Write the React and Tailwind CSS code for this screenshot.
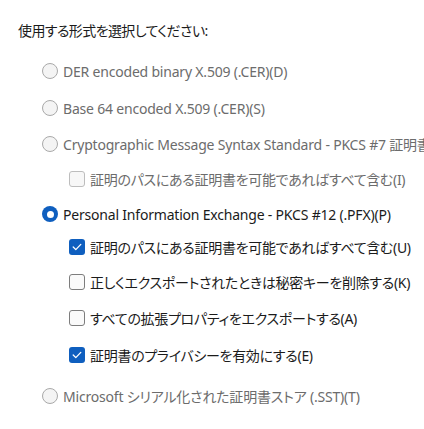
const font = "[font-family:'Noto_Sans','Noto_Sans_CJK_JP',sans-serif] [font-feature-settings:'palt']";

function Radio({ checked }) {
  if (checked) {
    return (
      <span className="w-[16px] h-[16px] rounded-full bg-[#0f5fbf] flex items-center justify-center shrink-0">
        <span className="w-[7px] h-[7px] rounded-full bg-white" />
      </span>
    );
  }
  return <span className="w-[16px] h-[16px] rounded-full border border-[#a9a9a9] bg-[#f4f4f4] shrink-0" />;
}

function Check({ checked, disabled }) {
  if (checked) {
    return (
      <span className="w-[16px] h-[16px] rounded-[3px] bg-[#0f5fbf] flex items-center justify-center shrink-0">
        <svg width="10" height="8" viewBox="0 0 10 8" fill="none">
          <path d="M1.2 4 L3.8 6.6 L8.8 1.4" stroke="white" strokeWidth="1.3" strokeLinecap="round" strokeLinejoin="round" />
        </svg>
      </span>
    );
  }
  return (
    <span
      className={
        disabled
          ? "w-[16px] h-[16px] rounded-[3px] border border-[#bdbdbd] bg-[#f7f7f7] shrink-0"
          : "w-[16px] h-[16px] rounded-[3px] border border-[#7d7d7d] bg-[#fafafa] shrink-0"
      }
    />
  );
}

export default function App() {
  return (
    <div className={`w-[424px] h-[429px] bg-white overflow-hidden text-[14px] ${font}`}>
      <div className="mt-[20px] h-[20px] pl-[18px] flex items-center text-[#1b1b1b] tracking-[-0.6px]">使用する形式を選択してください:</div>

      <div className="mt-[21px] h-[20px] pl-[42px] flex items-center gap-[5px] text-[#6c6c6c] whitespace-nowrap tracking-[-0.2px]">
        <Radio />
        <span>DER encoded binary X.509 (.CER)(D)</span>
      </div>
      <div className="mt-[17px] h-[20px] pl-[42px] flex items-center gap-[5px] text-[#6c6c6c] whitespace-nowrap tracking-[-0.2px]">
        <Radio />
        <span>Base 64 encoded X.509 (.CER)(S)</span>
      </div>
      <div className="mt-[16px] h-[20px] pl-[42px] flex items-center gap-[5px] text-[#6c6c6c] whitespace-nowrap tracking-[-0.2px]">
        <Radio />
        <span>Cryptographic Message Syntax Standard - PKCS #7 証明書</span>
      </div>
      <div className="mt-[15px] h-[20px] pl-[69px] flex items-center gap-[5px] text-[#6c6c6c] whitespace-nowrap tracking-[-0.3px]">
        <Check disabled />
        <span>証明のパスにある証明書を可能であればすべて含む(I)</span>
      </div>
      <div className="mt-[15px] h-[20px] pl-[42px] flex items-center gap-[5px] text-[#1b1b1b] whitespace-nowrap tracking-[-0.2px]">
        <Radio checked />
        <span>Personal Information Exchange - PKCS #12 (.PFX)(P)</span>
      </div>
      <div className="mt-[13px] h-[20px] pl-[69px] flex items-center gap-[5px] text-[#1b1b1b] whitespace-nowrap tracking-[-0.3px]">
        <Check checked />
        <span>証明のパスにある証明書を可能であればすべて含む(U)</span>
      </div>
      <div className="mt-[15px] h-[20px] pl-[69px] flex items-center gap-[5px] text-[#1b1b1b] whitespace-nowrap tracking-[-0.3px]">
        <Check />
        <span>正しくエクスポートされたときは秘密キーを削除する(K)</span>
      </div>
      <div className="mt-[16px] h-[20px] pl-[69px] flex items-center gap-[5px] text-[#1b1b1b] whitespace-nowrap tracking-[-0.3px]">
        <Check />
        <span>すべての拡張プロパティをエクスポートする(A)</span>
      </div>
      <div className="mt-[17px] h-[20px] pl-[69px] flex items-center gap-[5px] text-[#1b1b1b] whitespace-nowrap tracking-[-0.3px]">
        <Check checked />
        <span>証明書のプライバシーを有効にする(E)</span>
      </div>
      <div className="mt-[21px] h-[20px] pl-[42px] flex items-center gap-[5px] text-[#6c6c6c] whitespace-nowrap tracking-[-0.2px]">
        <Radio />
        <span>Microsoft シリアル化された証明書ストア (.SST)(T)</span>
      </div>
    </div>
  );
}
